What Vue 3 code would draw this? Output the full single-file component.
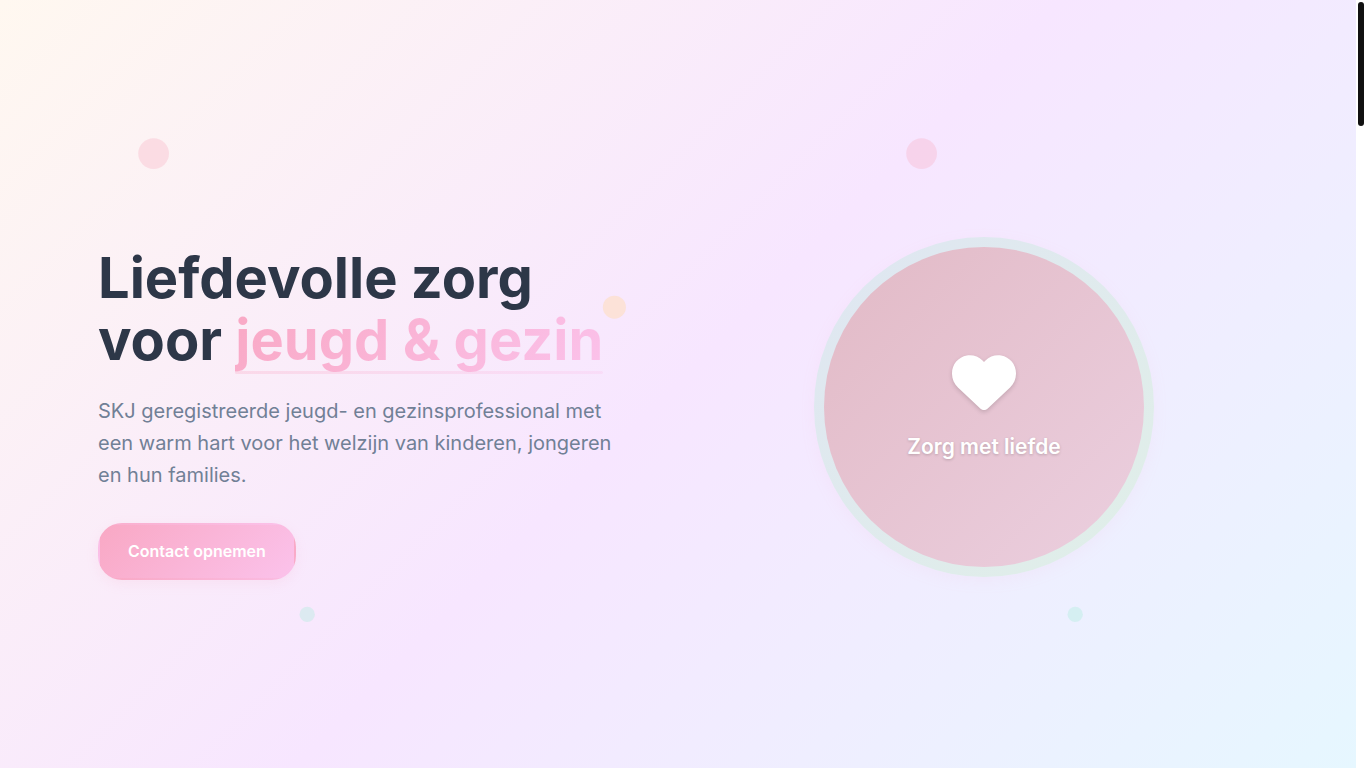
<script setup>
const tiles = [0, 1]
</script>

<template>
  <div class="page">
    <main class="hero">
      <div class="dots" aria-hidden="true">
        <svg v-for="t in tiles" :key="t" class="tile" viewBox="0 0 100 100">
          <circle cx="20" cy="20" r="2" fill="#f9a8be" fill-opacity="0.3" />
          <circle cx="80" cy="40" r="1.5" fill="#ffdcb4" fill-opacity="0.5" />
          <circle cx="40" cy="80" r="1" fill="#a8edda" fill-opacity="0.35" />
        </svg>
      </div>
      <div class="container">
        <section class="copy">
          <h1>Liefdevolle zorg<br />voor <span class="accent">jeugd &amp; gezin</span></h1>
          <p class="lead">
            SKJ geregistreerde jeugd- en gezinsprofessional met een warm hart voor het welzijn van
            kinderen, jongeren en hun families.
          </p>
          <a class="cta" href="#contact">Contact opnemen</a>
        </section>
        <section class="visual">
          <div class="circle">
            <svg class="heart" viewBox="0 0 512 512" aria-hidden="true">
              <path
                fill="#fff"
                d="M47.6 300.4L228.3 469.1c7.5 7 17.4 10.9 27.7 10.9s20.2-3.9 27.7-10.9L464.4 300.4c30.4-28.3 47.6-68 47.6-109.5v-5.8c0-69.9-50.5-129.5-119.4-141C347 36.5 300.6 51.4 268 84L256 96 244 84c-32.6-32.6-79-47.5-124.6-39.9C50.5 55.6 0 115.2 0 185.1v5.8c0 41.5 17.2 81.2 47.6 109.5z"
              />
            </svg>
            <span class="caption">Zorg met liefde</span>
          </div>
        </section>
      </div>
    </main>
    <div class="scrollbar" aria-hidden="true"><div class="thumb"></div></div>
  </div>
</template>

<style>
body {
  margin: 0;
  background: #fff;
}
</style>

<style scoped>
.page {
  display: flex;
  height: 100vh;
  overflow: hidden;
  font-family: Inter, "Liberation Sans", sans-serif;
}
.hero {
  position: relative;
  flex: 1;
  min-width: 0;
  box-sizing: border-box;
  padding-top: 59px;
  display: flex;
  align-items: center;
  justify-content: center;
  overflow: hidden;
  background: linear-gradient(135deg, #fff8f0 0%, #f7e6ff 50%, #e6f7ff 100%);
}
.dots {
  position: absolute;
  inset: 0;
  display: flex;
  overflow: hidden;
}
.tile {
  flex: none;
  width: 100vh;
  height: 100vh;
}
.container {
  position: relative;
  isolation: isolate;
  box-sizing: border-box;
  width: 100%;
  max-width: 1200px;
  padding: 0 20px;
  display: grid;
  grid-template-columns: 1fr 1fr;
  gap: 64px;
  align-items: start;
}
h1 {
  margin: 0 0 24px;
  font-size: 56px;
  line-height: 62px;
  font-weight: 700;
  color: #2d3748;
}
.accent {
  position: relative;
  color: transparent;
  background: linear-gradient(135deg, #f9a8c4, #fbc2eb);
  -webkit-background-clip: text;
  background-clip: text;
}
.accent::after {
  content: "";
  position: absolute;
  left: 0;
  bottom: 0;
  width: 100%;
  height: 3px;
  border-radius: 2px;
  background: linear-gradient(135deg, #f9a8c4, #fbc2eb);
  opacity: 0.3;
}
.lead {
  margin: 0 0 32px;
  max-width: 528px;
  font-size: 20px;
  line-height: 32px;
  color: #718096;
}
.cta {
  display: inline-block;
  border: 2px solid transparent;
  border-radius: 24px;
  padding: 14px 28px;
  font-size: 16px;
  line-height: 25px;
  font-weight: 600;
  color: #fff;
  text-decoration: none;
  background: linear-gradient(135deg, #f9a8c4, #fbc2eb);
  box-shadow: 0 4px 12px rgba(249, 168, 196, 0.15);
}
.visual {
  display: flex;
  justify-content: center;
}
.circle {
  position: relative;
  width: 320px;
  height: 320px;
  border-radius: 50%;
  display: flex;
  flex-direction: column;
  align-items: center;
  justify-content: center;
  gap: 16px;
  background: linear-gradient(135deg, #e2bac6, #ebcfdf);
}
.circle::before {
  content: "";
  position: absolute;
  inset: -10px;
  z-index: -1;
  border-radius: 50%;
  background: linear-gradient(135deg, #dfe6f2, #e0efe8);
  box-shadow: 0 4px 16px rgba(249, 168, 196, 0.08);
}
.heart {
  width: 64px;
  height: 64px;
  filter: drop-shadow(0 2px 2px rgba(0, 0, 0, 0.15));
}
.caption {
  font-size: 21px;
  line-height: 34px;
  font-weight: 600;
  color: #fff;
  text-shadow: 0 1px 3px rgba(0, 0, 0, 0.2);
}
.scrollbar {
  flex: none;
  box-sizing: border-box;
  width: 10px;
  padding: 2px;
  background: #fff;
}
.thumb {
  height: 124px;
  border-radius: 3px;
  background: #111;
}
</style>
